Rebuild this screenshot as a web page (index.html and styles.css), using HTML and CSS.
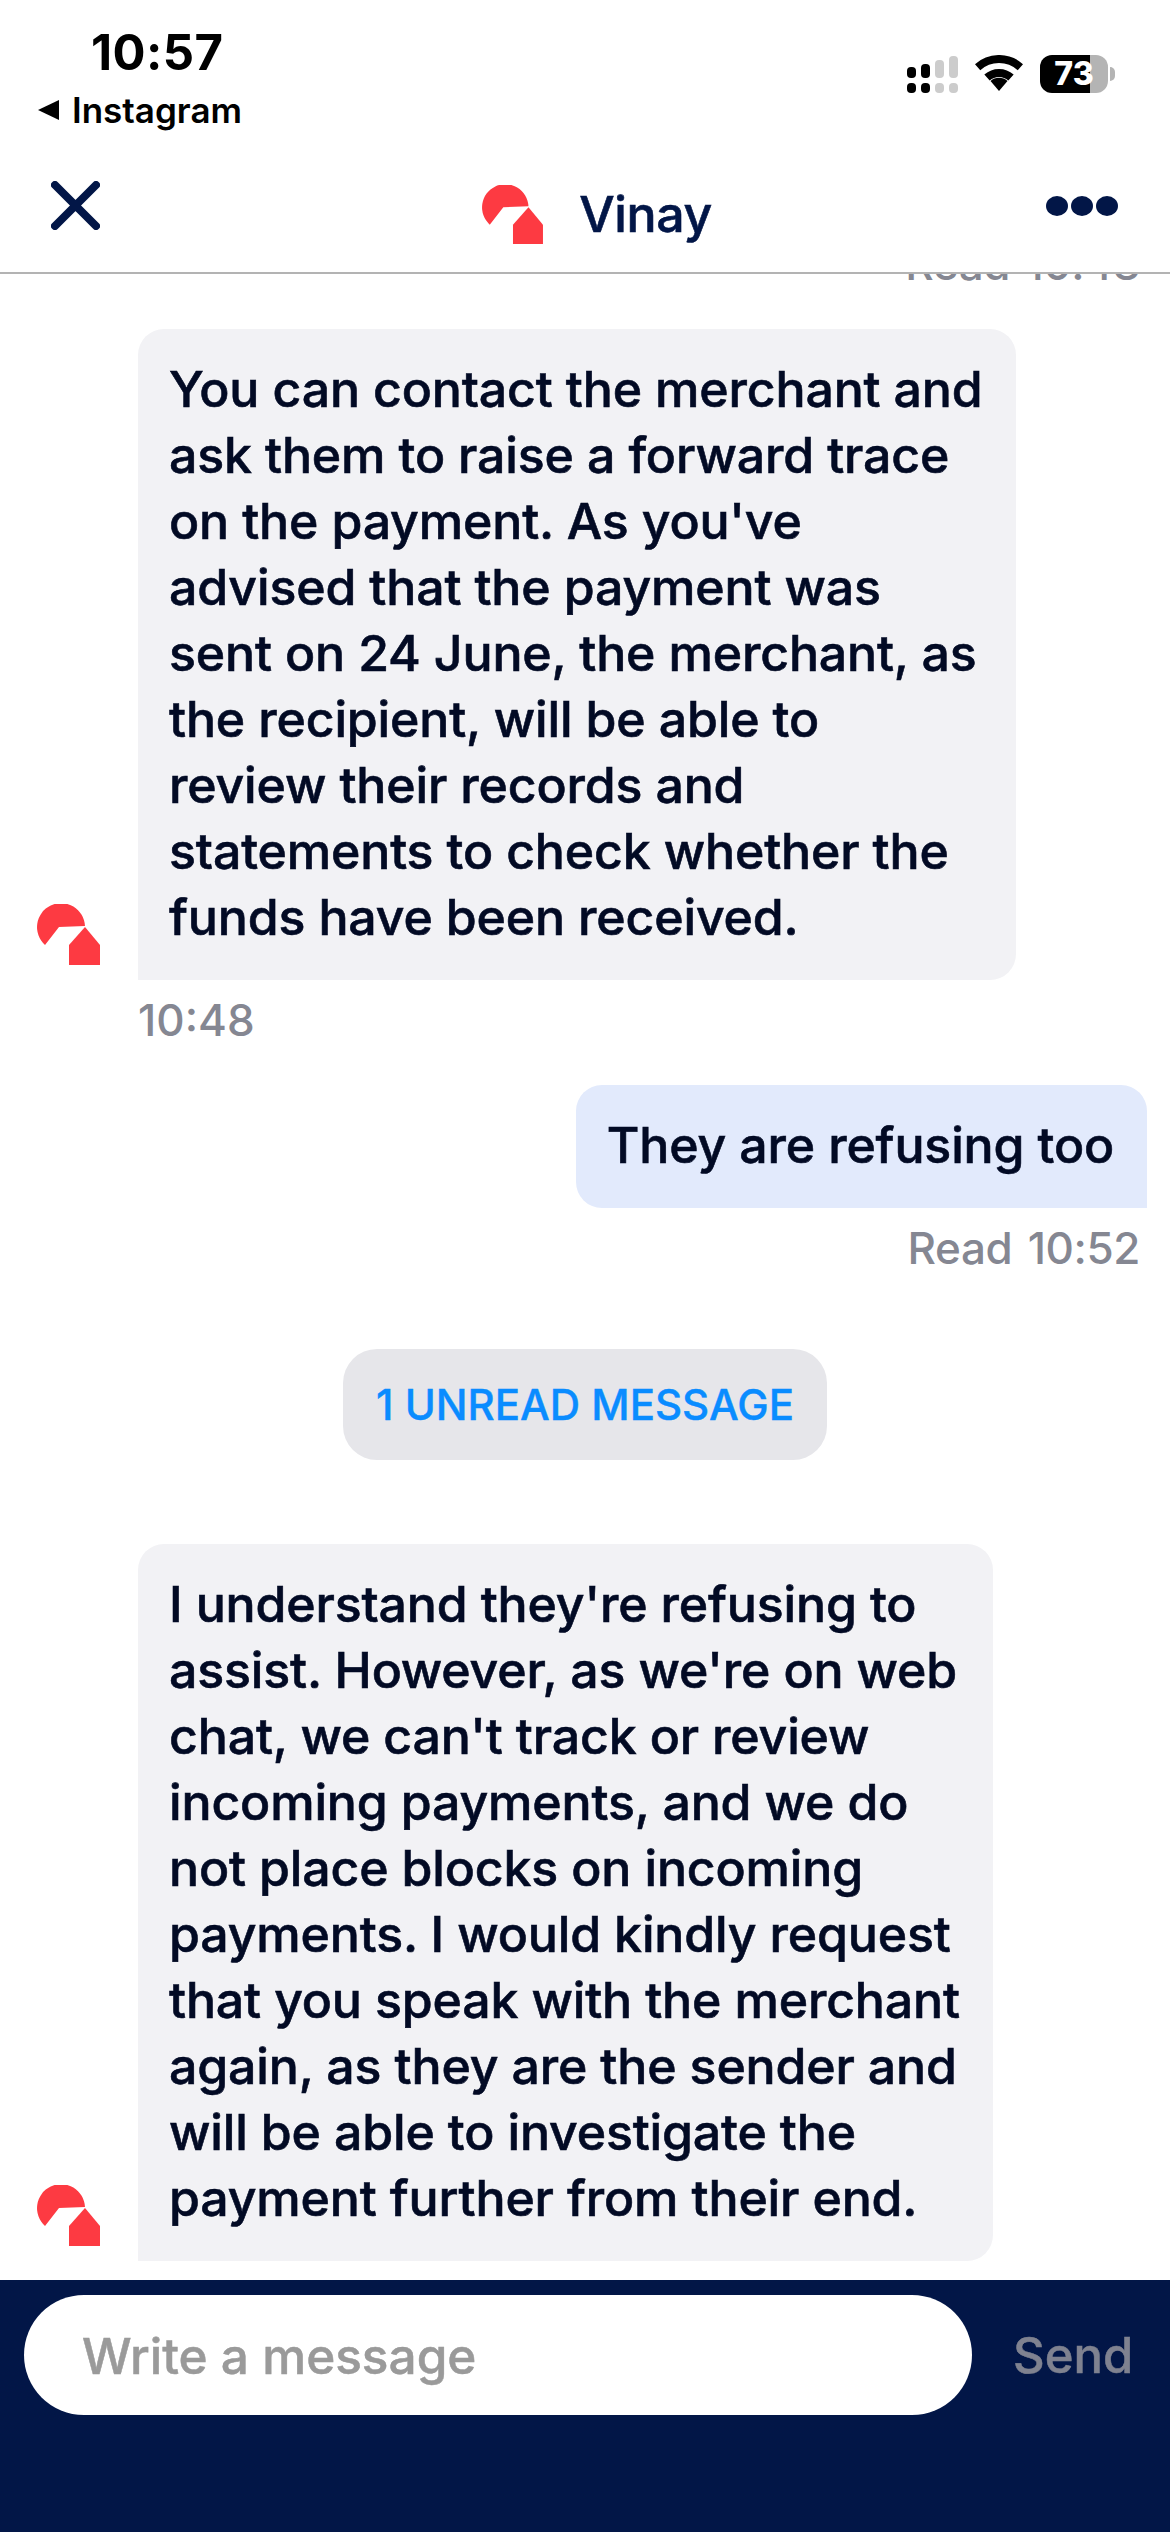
FILE: index.html
```html
<!DOCTYPE html>
<html lang="en">
<head>
  <meta charset="UTF-8">
  <meta name="viewport" content="width=device-width, initial-scale=1.0">
  <title>Vinay</title>
  <link rel="stylesheet" href="styles.css">
</head>
<body>
  <svg class="defs" width="0" height="0">
    <symbol id="logo" viewBox="0 0 63 61">
      <path d="M48 22 A24 24 0 1 0 8 41 L22 23 Z" fill="#fd3a42"/>
      <path d="M48 23 L63 41 V61 H32 V41 Z" fill="#fd3a42"/>
    </symbol>
  </svg>

  <div class="status">
    <div class="status-left">
      <div class="clock">10:57</div>
      <div class="back"><span class="back-arrow"></span>Instagram</div>
    </div>
    <div class="status-right">
      <svg class="signal" width="51" height="37" viewBox="0 0 51 37">
        <rect x="0" y="11" width="9" height="11" rx="4"/>
        <rect x="14" y="8" width="9" height="14" rx="4"/>
        <rect x="28" y="4" width="9" height="18" rx="4" fill="#ccc"/>
        <rect x="42" y="0" width="9" height="22" rx="4" fill="#ccc"/>
        <rect x="0" y="27" width="9" height="10" rx="4"/>
        <rect x="14" y="27" width="9" height="10" rx="4"/>
        <rect x="28" y="27" width="9" height="10" rx="4" fill="#ccc"/>
        <rect x="42" y="27" width="9" height="10" rx="4" fill="#ccc"/>
      </svg>
      <svg class="wifi" width="48" height="36" viewBox="0 0 48 36">
        <path d="M2.6 12.2 A32 32 0 0 1 45.4 12.2" fill="none" stroke="#000" stroke-width="8"/>
        <path d="M12 22.6 A18 18 0 0 1 36 22.6" fill="none" stroke="#000" stroke-width="8"/>
        <path d="M24 36 L15.5 26 A13 13 0 0 1 32.5 26 Z"/>
      </svg>
      <div class="battery">73</div>
      <span class="battery-nub"></span>
    </div>
  </div>

  <header class="topbar">
    <svg class="close" width="49" height="49" viewBox="0 0 49 49">
      <path d="M4 4 L45 45 M45 4 L4 45" fill="none" stroke="#021647" stroke-width="8" stroke-linecap="round"/>
    </svg>
    <div class="agent">
      <svg class="agent-logo" width="61" height="59"><use href="#logo"/></svg>
      <span>Vinay</span>
    </div>
    <div class="more"><i></i><i></i><i></i></div>
  </header>

  <main class="chat">
    <div class="meta meta-right">Read 10:48</div>

    <div class="row">
      <svg class="avatar" width="63" height="61"><use href="#logo"/></svg>
      <div class="bubble bubble-in">You can contact the merchant and<br>ask them to raise a forward trace<br>on the payment. As you've<br>advised that the payment was<br>sent on 24 June, the merchant, as<br>the recipient, will be able to<br>review their records and<br>statements to check whether the<br>funds have been received.</div>
    </div>
    <div class="meta meta-left">10:48</div>

    <div class="row row-out">
      <div class="bubble bubble-out">They are refusing too</div>
    </div>
    <div class="meta meta-right">Read 10:52</div>

    <div class="unread">1 UNREAD MESSAGE</div>

    <div class="row">
      <svg class="avatar" width="63" height="61"><use href="#logo"/></svg>
      <div class="bubble bubble-in">I understand they're refusing to<br>assist. However, as we're on web<br>chat, we can't track or review<br>incoming payments, and we do<br>not place blocks on incoming<br>payments. I would kindly request<br>that you speak with the merchant<br>again, as they are the sender and<br>will be able to investigate the<br>payment further from their end.</div>
    </div>
  </main>

  <footer class="composer">
    <div class="field">Write a message</div>
    <div class="send">Send</div>
  </footer>
</body>
</html>
```

FILE: styles.css
```css
html, body {
  margin: 0;
  height: 2532px;
  overflow: hidden;
}
body {
  display: flex;
  flex-direction: column;
  background: #fff;
  font-family: "Inter", "Liberation Sans", sans-serif;
  color: #020a24;
}
.defs {
  display: none;
}

/* phone status bar */
.status {
  height: 140px;
  flex: none;
  display: flex;
  justify-content: space-between;
  color: #000;
}
.status-left {
  padding: 25px 0 0 38px;
}
.clock {
  margin-left: 53px;
  font-size: 49px;
  line-height: 56px;
  font-weight: 700;
  letter-spacing: 0.4px;
}
.back {
  display: flex;
  align-items: center;
  margin-top: 9px;
  font-size: 35px;
  line-height: 40px;
  font-weight: 600;
}
.back-arrow {
  width: 0;
  height: 0;
  margin-right: 13px;
  border-top: 10px solid transparent;
  border-bottom: 10px solid transparent;
  border-right: 21px solid #000;
}
.status-right {
  display: flex;
  align-items: flex-start;
  padding: 55px 55px 0 0;
}
.signal {
  margin-top: 1px;
  margin-right: 17px;
}
.wifi {
  margin-right: 17px;
}
.battery {
  width: 68px;
  height: 38px;
  border-radius: 12px;
  background: linear-gradient(90deg, #000 0 73%, #b4b4b4 73%);
  color: #fff;
  font-size: 32px;
  line-height: 38px;
  font-weight: 800;
  text-align: center;
}
.battery-nub {
  width: 5px;
  height: 14px;
  margin: 12px 0 0 2px;
  border-radius: 0 7px 7px 0;
  background: #b4b4b4;
}

/* top bar */
.topbar {
  height: 132px;
  flex: none;
  display: flex;
  align-items: flex-start;
  justify-content: space-between;
  padding: 0 52px 0 51px;
  border-bottom: 2px solid #b3b3b3;
  position: relative;
  z-index: 1;
  background: #fff;
}
.close {
  margin-top: 41px;
}
.agent {
  display: flex;
  align-items: center;
  gap: 36px;
  margin-top: 45px;
  margin-left: 48px;
  font-size: 50px;
  line-height: 59px;
  font-weight: 500;
  letter-spacing: -0.4px;
  -webkit-text-stroke: 0.6px;
  color: #021647;
}
.more {
  display: flex;
  gap: 3px;
  margin-top: 56px;
}
.more i {
  width: 22px;
  height: 20px;
  border-radius: 50%;
  background: #021647;
}

/* messages */
.chat {
  flex: 1;
  min-height: 0;
  overflow: hidden;
  display: flex;
  flex-direction: column;
  justify-content: flex-end;
  padding-bottom: 19px;
}
.row {
  flex: none;
  display: flex;
  align-items: flex-end;
  gap: 38px;
  padding: 0 23px 0 37px;
}
.row-out {
  justify-content: flex-end;
  margin-top: 40px;
}
.avatar {
  flex: none;
  margin-bottom: 15px;
}
.bubble {
  padding: 27px 33px 30px 31px;
  font-size: 50px;
  line-height: 66px;
  font-weight: 500;
  letter-spacing: -0.15px;
  -webkit-text-stroke: 0.6px;
  white-space: nowrap;
}
.bubble-in {
  background: #f2f2f5;
  border-radius: 26px 26px 26px 0;
}
.bubble-out {
  background: #e2eafc;
  border-radius: 26px 26px 0 26px;
}
.meta {
  flex: none;
  font-size: 44px;
  line-height: 50px;
  font-weight: 500;
  color: #858792;
}
.meta-right {
  margin: 15px 30px 40px 0;
  text-align: right;
  letter-spacing: -0.4px;
  word-spacing: 4px;
}
.meta-left {
  margin: 15px 0 0 138px;
}
.unread {
  flex: none;
  align-self: center;
  margin: 36px 0 84px;
  padding: 0 33px;
  height: 111px;
  border-radius: 34px;
  background: #e6e6ea;
  color: #0a8cff;
  font-size: 42px;
  line-height: 111px;
  font-weight: 500;
  -webkit-text-stroke: 0.4px;
}

/* message box */
.composer {
  height: 252px;
  flex: none;
  box-sizing: border-box;
  display: flex;
  align-items: flex-start;
  padding: 15px 0 0 24px;
  background: #021647;
}
.field {
  flex: none;
  width: 948px;
  height: 120px;
  box-sizing: border-box;
  padding-left: 58px;
  border-radius: 60px;
  background: #fff;
  color: #9a9a9a;
  font-size: 49.5px;
  line-height: 122px;
  font-weight: 500;
  -webkit-text-stroke: 0.5px;
}
.send {
  margin-left: 41px;
  color: #7f8290;
  font-size: 49px;
  line-height: 122px;
  font-weight: 500;
  -webkit-text-stroke: 0.5px;
}
```
